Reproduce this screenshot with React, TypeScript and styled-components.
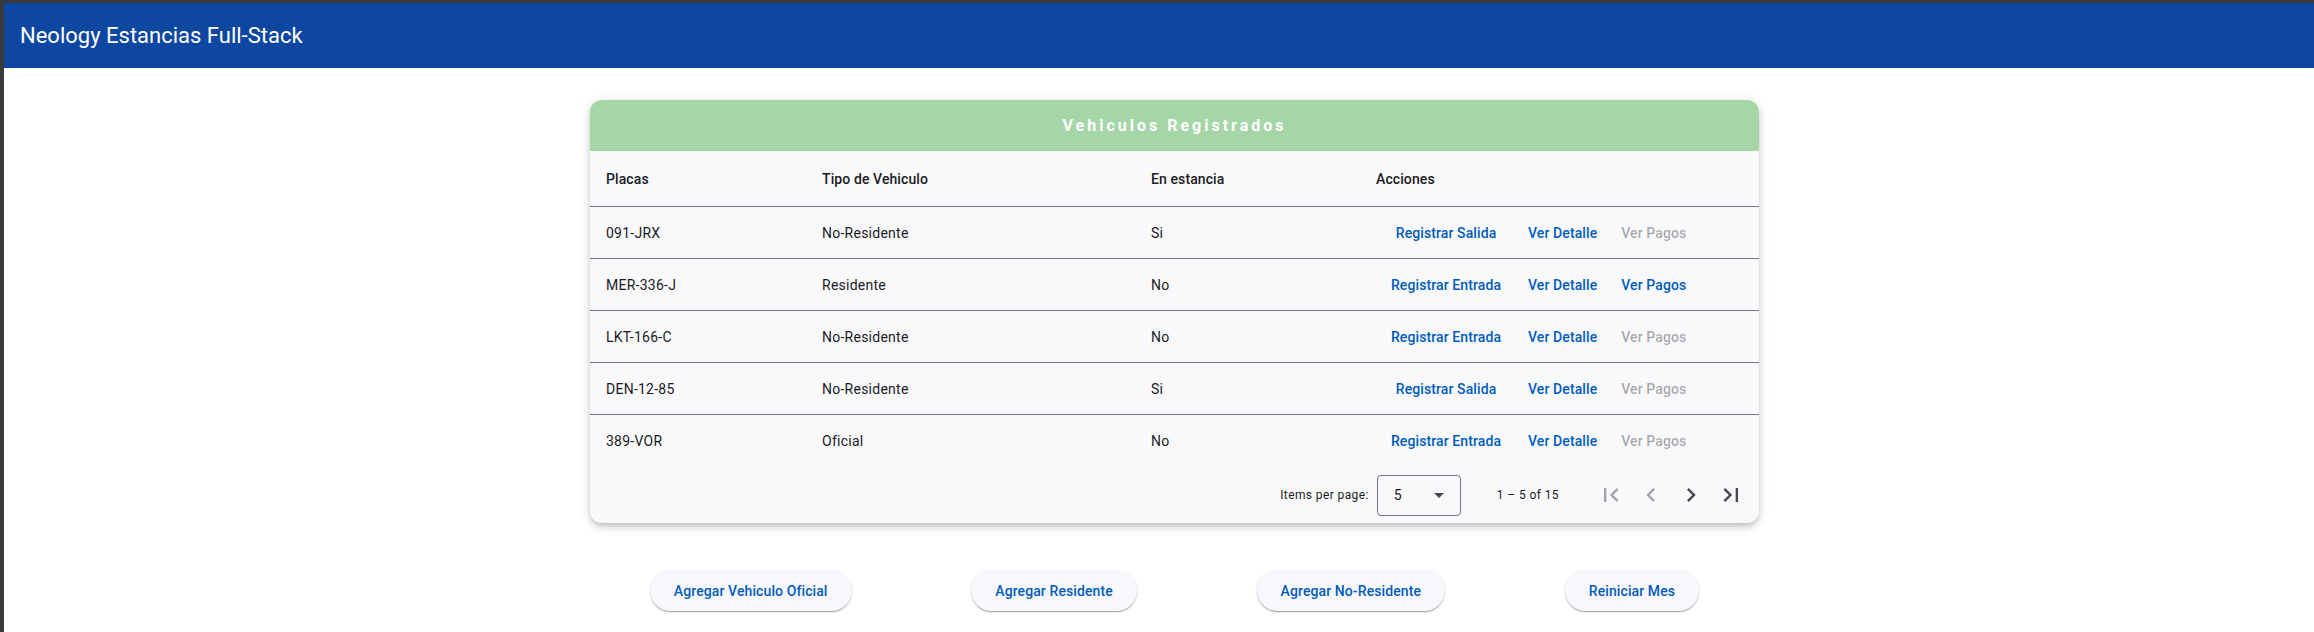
import React from "react";
import styled, { createGlobalStyle } from "styled-components";

const GlobalStyle = createGlobalStyle`
  html, body { margin: 0; padding: 0; background: #ffffff; }
  body { font-family: Roboto, "Noto Sans", Arial, sans-serif; -webkit-font-smoothing: antialiased; }
  * { box-sizing: border-box; }
`;

const Frame = styled.div`
  min-height: 100vh;
  border-top: 3px solid #3a3a3d;
  border-left: 4px solid #3a3a3d;
  background: #ffffff;
`;

const Toolbar = styled.header`
  height: 65px;
  background: #0d47a1;
  color: #ffffff;
  display: flex;
  align-items: center;
  padding: 0 16px;
  font-size: 22px;
  font-weight: 400;
  line-height: 28px;
`;

const Main = styled.main`
  padding: 32px 0 0 31px;
`;

const Card = styled.section`
  width: 1169px;
  margin: 0 auto;
  background: #f9f9fc;
  border-radius: 12px;
  overflow: hidden;
  box-shadow: 0 3px 5px -1px rgba(0, 0, 0, 0.14), 0 5px 10px 0 rgba(0, 0, 0, 0.1),
    0 1px 14px 0 rgba(0, 0, 0, 0.08);
`;

const CardTitle = styled.div`
  height: 51px;
  background: #a5d6a7;
  color: #ffffff;
  display: flex;
  align-items: center;
  justify-content: center;
  font-size: 16px;
  font-weight: 700;
  letter-spacing: 3px;
`;

const Row = styled.div<{ $h: number; $last?: boolean }>`
  display: grid;
  grid-template-columns: 216px 329px 225px 1fr;
  height: ${(p) => p.$h}px;
  border-bottom: ${(p) => (p.$last ? "none" : "1px solid #74777f")};
`;

const Cell = styled.div<{ $head?: boolean }>`
  display: flex;
  align-items: center;
  padding: 0 16px;
  font-size: 14px;
  font-weight: ${(p) => (p.$head ? 500 : 400)};
  letter-spacing: ${(p) => (p.$head ? "0.1px" : "0.25px")};
  color: #1a1b1f;
  white-space: nowrap;
`;

const ActionButton = styled.button<{ $wide?: boolean }>`
  height: 40px;
  border: none;
  background: transparent;
  font-family: inherit;
  font-size: 14px;
  font-weight: 500;
  letter-spacing: 0.1px;
  color: ${(p) => (p.disabled ? "rgba(26, 27, 31, 0.38)" : "#005cbb")};
  padding: 0 12px;
  width: ${(p) => (p.$wide ? "140px" : "auto")};
  min-width: 64px;
  border-radius: 20px;
  white-space: nowrap;
  cursor: pointer;
`;

const Paginator = styled.div`
  height: 56px;
  display: flex;
  align-items: center;
  justify-content: flex-end;
  padding: 0 8px;
  color: #1a1b1f;
  font-size: 12px;
  letter-spacing: 0.4px;
`;

const PageSizeLabel = styled.span`
  margin: 0 4px;
  color: #1a1b1f;
`;

const SelectBox = styled.div`
  width: 84px;
  height: 41px;
  margin: 0 12px 0 4px;
  border: 1px solid #74777f;
  border-radius: 4px;
  display: flex;
  align-items: center;
  justify-content: space-between;
  padding: 0 16px;
  font-size: 14px;
  letter-spacing: 0.25px;
  color: #1a1b1f;
`;

const Arrow = styled.span`
  width: 0;
  height: 0;
  border-left: 5px solid transparent;
  border-right: 5px solid transparent;
  border-top: 5px solid #44474e;
`;

const RangeLabel = styled.span`
  margin: 0 32px 0 24px;
`;

const IconButton = styled.button`
  width: 40px;
  height: 40px;
  padding: 0;
  border: none;
  background: transparent;
  display: flex;
  align-items: center;
  justify-content: center;
  color: ${(p) => (p.disabled ? "rgba(26, 27, 31, 0.38)" : "#44474e")};
`;

const ButtonRow = styled.div`
  width: 1169px;
  margin: 47px auto 0;
  display: flex;
  justify-content: space-around;
`;

const RaisedButton = styled.button`
  height: 41px;
  padding: 0 24px;
  border: none;
  border-radius: 21px;
  background: #f8f8fc;
  color: #005cbb;
  font-family: inherit;
  font-size: 14px;
  font-weight: 500;
  letter-spacing: 0.1px;
  white-space: nowrap;
  box-shadow: 0 2px 1px -1px rgba(0, 0, 0, 0.2), 0 1px 1px 0 rgba(0, 0, 0, 0.14),
    0 1px 3px 0 rgba(0, 0, 0, 0.12);
  cursor: pointer;
`;

const Icon = ({ d }: { d: string }) => (
  <svg width="28" height="28" viewBox="0 0 24 24" fill="currentColor">
    <path d={d} />
  </svg>
);

const vehicles = [
  { placa: "091-JRX", tipo: "No-Residente", estancia: "Si", pagos: false },
  { placa: "MER-336-J", tipo: "Residente", estancia: "No", pagos: true },
  { placa: "LKT-166-C", tipo: "No-Residente", estancia: "No", pagos: false },
  { placa: "DEN-12-85", tipo: "No-Residente", estancia: "Si", pagos: false },
  { placa: "389-VOR", tipo: "Oficial", estancia: "No", pagos: false },
];

export default function App() {
  return (
    <>
      <GlobalStyle />
      <Frame>
        <Toolbar>Neology Estancias Full-Stack</Toolbar>
        <Main>
          <Card>
            <CardTitle>Vehiculos Registrados</CardTitle>
            <Row $h={56}>
              <Cell $head>Placas</Cell>
              <Cell $head>Tipo de Vehiculo</Cell>
              <Cell $head>En estancia</Cell>
              <Cell $head>Acciones</Cell>
            </Row>
            {vehicles.map((v, i) => (
              <Row key={v.placa} $h={52} $last={i === vehicles.length - 1}>
                <Cell>{v.placa}</Cell>
                <Cell>{v.tipo}</Cell>
                <Cell>{v.estancia}</Cell>
                <Cell>
                  <ActionButton $wide>
                    {v.estancia === "Si" ? "Registrar Salida" : "Registrar Entrada"}
                  </ActionButton>
                  <ActionButton>Ver Detalle</ActionButton>
                  <ActionButton disabled={!v.pagos}>Ver Pagos</ActionButton>
                </Cell>
              </Row>
            ))}
            <Paginator>
              <PageSizeLabel>Items per page:</PageSizeLabel>
              <SelectBox>
                <span>5</span>
                <Arrow />
              </SelectBox>
              <RangeLabel>1 – 5 of 15</RangeLabel>
              <IconButton disabled>
                <Icon d="M18.41 16.59L13.82 12l4.59-4.59L17 6l-6 6 6 6zM6 6h2v12H6z" />
              </IconButton>
              <IconButton disabled>
                <Icon d="M15.41 7.41L14 6l-6 6 6 6 1.41-1.41L10.83 12z" />
              </IconButton>
              <IconButton>
                <Icon d="M10 6L8.59 7.41 13.17 12l-4.58 4.59L10 18l6-6z" />
              </IconButton>
              <IconButton>
                <Icon d="M5.59 7.41L10.18 12l-4.59 4.59L7 18l6-6-6-6zM16 6h2v12h-2z" />
              </IconButton>
            </Paginator>
          </Card>
          <ButtonRow>
            <RaisedButton>Agregar Vehiculo Oficial</RaisedButton>
            <RaisedButton>Agregar Residente</RaisedButton>
            <RaisedButton>Agregar No-Residente</RaisedButton>
            <RaisedButton>Reiniciar Mes</RaisedButton>
          </ButtonRow>
        </Main>
      </Frame>
    </>
  );
}
